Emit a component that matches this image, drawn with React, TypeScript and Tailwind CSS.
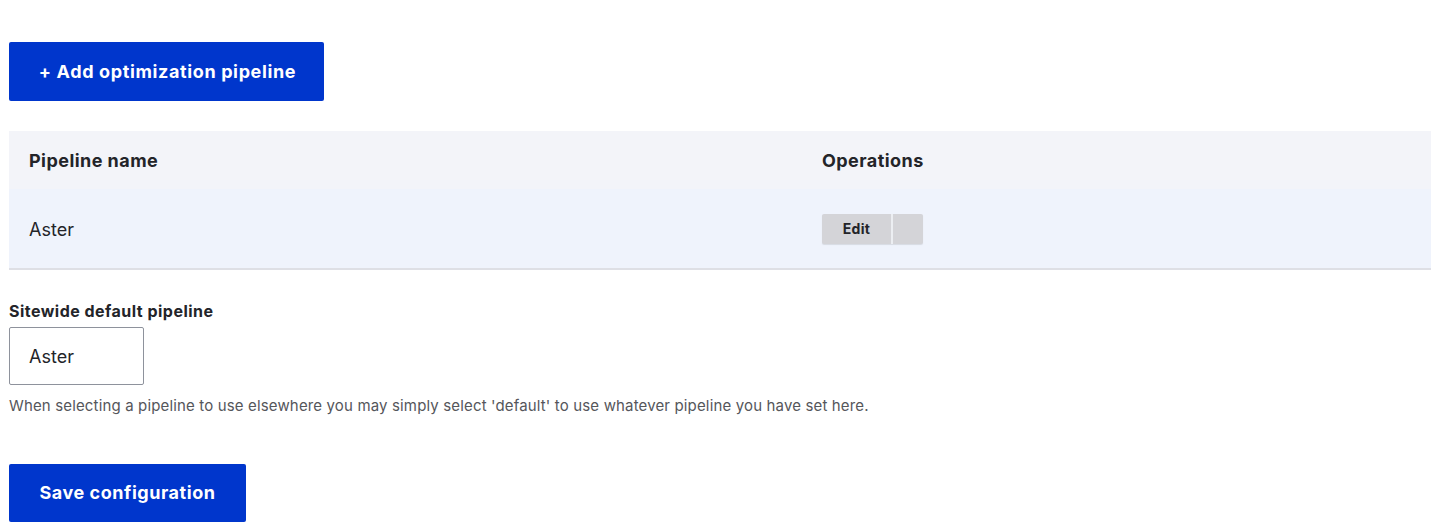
import React from 'react';

const App: React.FC = () => {
  return (
    <div className="min-h-[532px] bg-white pl-[9px] pt-[42px] text-[#232429]" style={{ fontFamily: 'Inter, "Noto Sans", sans-serif' }}>
      <button className="flex h-[59px] w-[315px] items-center justify-center rounded-[2px] bg-[#0036cc] pl-[2px] text-[18px] font-bold tracking-[0.035em] text-white">
        + Add optimization pipeline
      </button>

      <div className="mt-[30px]">
        <div className="grid h-[58px] grid-cols-[813px_1fr] items-center bg-[#f3f4f9] text-[18px] font-bold tracking-[0.025em]">
          <div className="pl-[20px]">Pipeline name</div>
          <div>Operations</div>
        </div>
        <div className="grid h-[81px] grid-cols-[813px_1fr] items-center border-b-2 border-[#dedfe5] bg-[#eff3fc] text-[18px]">
          <div className="pl-[20px] pt-[2px]">Aster</div>
          <div>
            <div className="flex h-[30px] w-[101px] overflow-hidden rounded-[2px] bg-[#d4d4d8] shadow-[0_1px_1px_rgba(0,0,0,0.1)]">
              <span className="flex w-[69px] items-center justify-center text-[14px] font-bold tracking-[0.02em]">Edit</span>
              <span className="w-[2px] bg-[#eceef2]" />
              <span className="flex-1" />
            </div>
          </div>
        </div>
      </div>

      <div className="mt-[29px] text-[16px] font-bold tracking-[0.03em]">Sitewide default pipeline</div>
      <div className="mt-[4px] flex h-[58px] w-[135px] items-center rounded-[2px] border border-[#8e929c] pl-[19px] text-[18px]">
        Aster
      </div>
      <p className="mt-[10px] text-[15px] tracking-[0.01em] text-[#55565b]">
        When selecting a pipeline to use elsewhere you may simply select 'default' to use whatever pipeline you have set here.
      </p>

      <button className="mt-[46px] flex h-[58px] w-[237px] items-center justify-center rounded-[2px] bg-[#0036cc] text-[18px] font-bold tracking-[0.03em] text-white">
        Save configuration
      </button>
    </div>
  );
};

export default App;
